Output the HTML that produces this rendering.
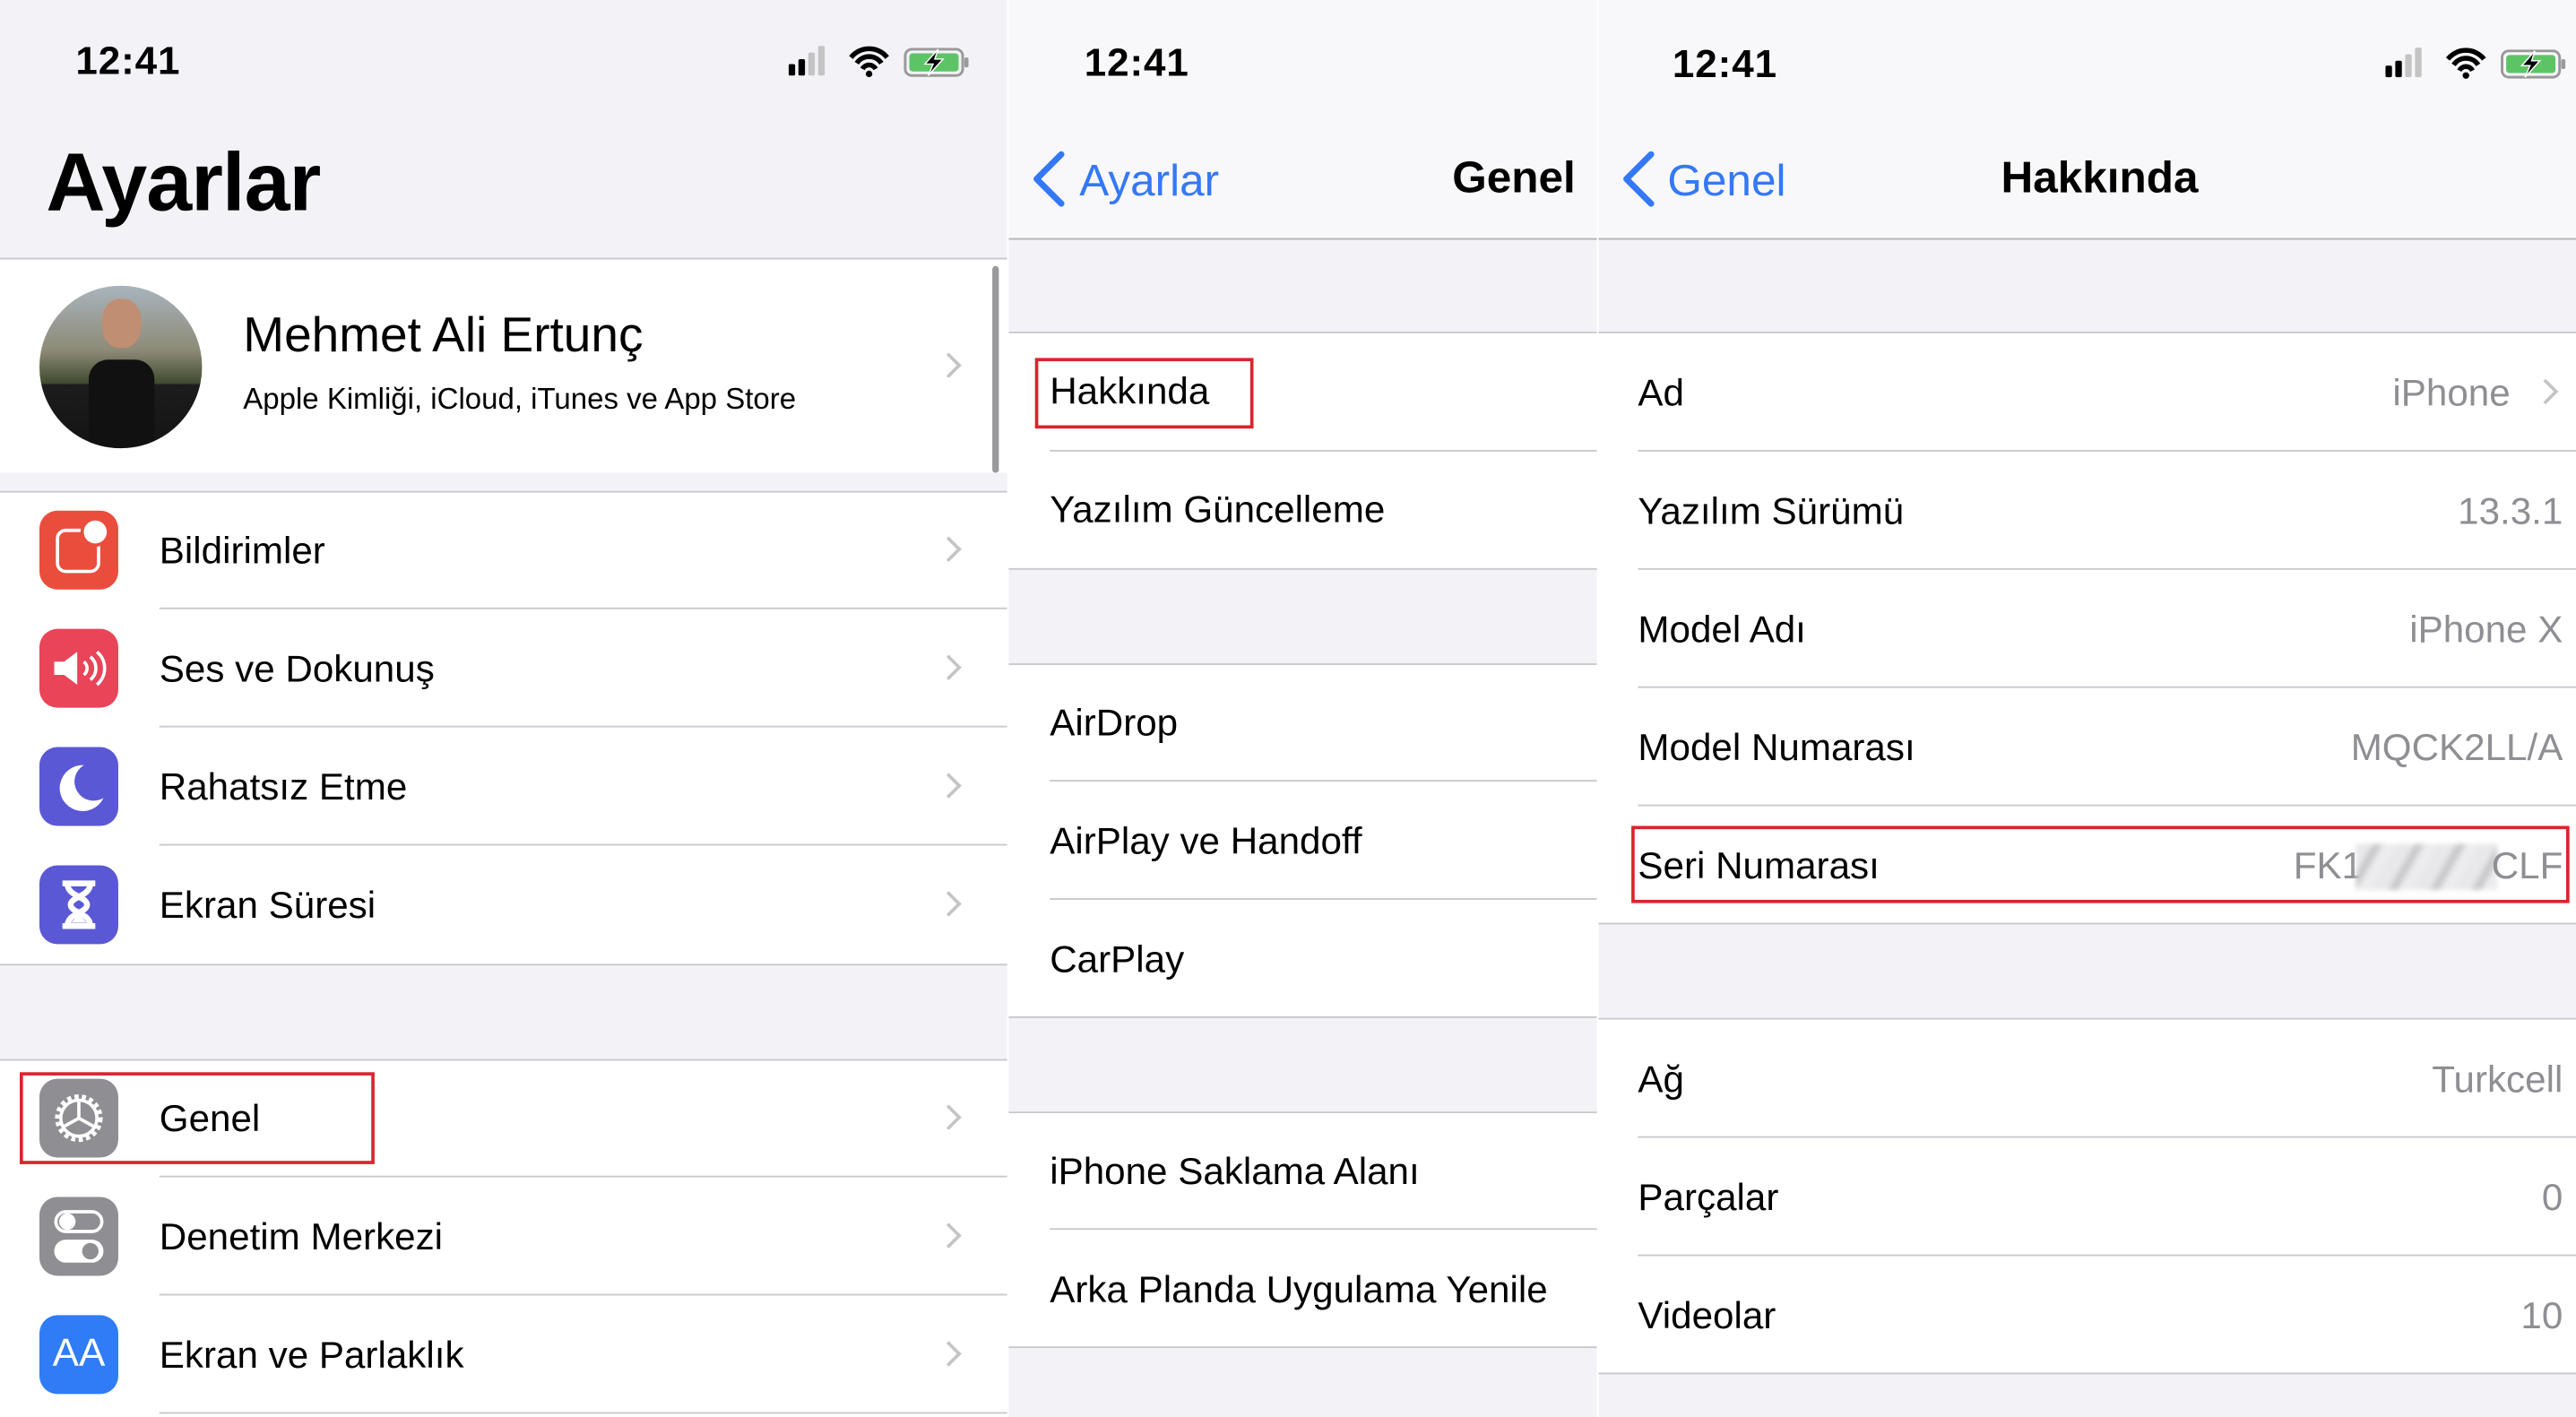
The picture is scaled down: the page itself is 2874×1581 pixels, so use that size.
<!DOCTYPE html>
<html><head><meta charset="utf-8"><style>
*{margin:0;padding:0;box-sizing:border-box}
html,body{width:2874px;height:1581px;overflow:hidden;background:#fff}
#w{position:absolute;left:0;top:0;width:1568px;height:863px;transform:scale(1.83291,1.832);transform-origin:0 0;font-family:"Liberation Sans",sans-serif;color:#000}
.a{position:absolute}
.t{position:absolute;font-size:23px;line-height:28px;white-space:nowrap}
.hl{position:absolute;height:1px;background:#c8c7cc}
.chev{position:absolute;width:11px;height:11px;border-right:2px solid #c4c4c7;border-top:2px solid #c4c4c7;transform:rotate(45deg)}
.ico{position:absolute;left:24px;width:48px;height:48px;border-radius:11px}
.v{position:absolute;font-size:23px;line-height:28px;color:#8e8e93;white-space:nowrap;text-align:right}
.time{position:absolute;font-size:24px;font-weight:bold;letter-spacing:0.5px}
.red{position:absolute;border:2px solid #d9252e}
</style></head><body><div id="w">

<!-- PANEL 1 -->
<div class="a" style="left:0;top:0;width:613px;height:863px;background:#f2f2f7"></div>
<div class="time" style="left:46px;top:24px">12:41</div>
<svg class="a" style="left:480px;top:27px" width="112" height="22" viewBox="0 0 112 22">
<rect x="0" y="12" width="4" height="7" rx="1" fill="#000"/><rect x="6" y="9" width="4" height="10" rx="1" fill="#000"/><rect x="12" y="5" width="4" height="14" rx="1" fill="#c4c4c4"/><rect x="18" y="1" width="4" height="18" rx="1" fill="#c4c4c4"/>
<path d="M38 8 a14 14 0 0 1 22 0 M41.5 11.5 a9 9 0 0 1 15 0 M45 15 a4.5 4.5 0 0 1 8 0" stroke="#000" stroke-width="3" fill="none"/><circle cx="49" cy="18" r="2" fill="#000"/>
<rect x="71" y="3" width="35" height="16" rx="4" fill="none" stroke="#999" stroke-width="1.6"/><rect x="73.5" y="5.5" width="30" height="11" rx="2" fill="#5dc466"/><rect x="107" y="8" width="2.5" height="6" rx="1" fill="#999"/>
<path d="M91 3 L83 12 L88 12 L85 19 L94 9 L89 9 Z" fill="#000" stroke="#fff" stroke-width="0.8"/></svg>
<div class="a" style="left:28px;top:82px;font-size:50px;font-weight:bold;letter-spacing:-0.5px">Ayarlar</div>
<div class="hl" style="left:0;top:157px;width:613px"></div>
<div class="a" style="left:0;top:158px;width:613px;height:130px;background:#fff"></div>
<div class="a" style="left:24px;top:174px;width:99px;height:99px;border-radius:50%;background:radial-gradient(circle at 50% 25%,#c9a58a 0 12%,transparent 13%),linear-gradient(180deg,#a9b4bd 0%,#8d8a76 40%,#3f4a2e 60%,#1c1c1c 61%,#141414 100%);overflow:hidden"><div class="a" style="left:30px;top:45px;width:40px;height:60px;background:#111;border-radius:12px 12px 0 0"></div><div class="a" style="left:38px;top:8px;width:24px;height:30px;background:#c08e72;border-radius:45%"></div></div>
<div class="a" style="left:148px;top:188px;font-size:30px">Mehmet Ali Ertunç</div>
<div class="a" style="left:148px;top:233px;font-size:18px">Apple Kimliği, iCloud, iTunes ve App Store</div>
<div class="chev" style="left:572px;top:217px"></div>
<div class="a" style="left:604px;top:162px;width:4px;height:126px;background:#9a9a9e;border-radius:2px"></div>
<div class="hl" style="left:0;top:299px;width:613px"></div>
<div class="a" style="left:0;top:300px;width:613px;height:287px;background:#fff"></div>
<div class="a" style="left:0;top:646px;width:613px;height:217px;background:#fff"></div>
<div class="hl" style="left:97px;top:370px;width:516px"></div>
<div class="hl" style="left:97px;top:442px;width:516px"></div>
<div class="hl" style="left:97px;top:514px;width:516px"></div>
<div class="hl" style="left:0;top:587px;width:613px"></div>
<div class="hl" style="left:0;top:645px;width:613px"></div>
<div class="hl" style="left:97px;top:716px;width:516px"></div>
<div class="hl" style="left:97px;top:788px;width:516px"></div>
<div class="hl" style="left:97px;top:860px;width:516px"></div>

<div class="ico" style="top:311px;background:#eb4d3d"><div class="a" style="left:10px;top:11px;width:27px;height:27px;border:2.5px solid #fff;border-radius:6px"></div><div class="a" style="left:27px;top:6px;width:14px;height:14px;border-radius:50%;background:#fff;box-shadow:0 0 0 2px #eb4d3d"></div></div>
<div class="t" style="left:97px;top:321px">Bildirimler</div><div class="chev" style="left:572px;top:329px"></div>

<div class="ico" style="top:383px;background:#ea4459"><svg width="48" height="48"><path d="M9 20h6l8-6v20l-8-6H9z" fill="#fff"/><path d="M27 20a5 5 0 0 1 0 8M31 17a9 9 0 0 1 0 14M35 14a13 13 0 0 1 0 20" stroke="#fff" stroke-width="2" fill="none"/></svg></div>
<div class="t" style="left:97px;top:393px">Ses ve Dokunuş</div><div class="chev" style="left:572px;top:401px"></div>

<div class="ico" style="top:455px;background:#5a58d5"><svg width="48" height="48"><path d="M27 11a14 14 0 1 0 12 20a11 11 0 0 1-12-20z" fill="#fff"/></svg></div>
<div class="t" style="left:97px;top:465px">Rahatsız Etme</div><div class="chev" style="left:572px;top:473px"></div>

<div class="ico" style="top:527px;background:#5a58d5"><svg width="48" height="48"><path d="M14 11h20M14 37h20M17 11c0 8 12 8 12 13s-12 5-12 13M31 11c0 8-12 8-12 13s12 5 12 13" stroke="#fff" stroke-width="3.5" fill="none"/><path d="M19 35l5-5 5 5z" fill="#fff"/></svg></div>
<div class="t" style="left:97px;top:537px">Ekran Süresi</div><div class="chev" style="left:572px;top:545px"></div>

<div class="ico" style="top:657px;background:#8e8e93"><svg width="48" height="48"><circle cx="24" cy="24" r="13" fill="none" stroke="#fff" stroke-width="3" stroke-dasharray="2.5 2"/><circle cx="24" cy="24" r="11" fill="none" stroke="#fff" stroke-width="2"/><path d="M24 24L24 14M24 24L15 29M24 24L33 29" stroke="#fff" stroke-width="2"/></svg></div>
<div class="t" style="left:97px;top:667px">Genel</div><div class="chev" style="left:572px;top:675px"></div>
<div class="red" style="left:12px;top:653px;width:216px;height:56px"></div>

<div class="ico" style="top:729px;background:#8e8e93"><div class="a" style="left:9px;top:8px;width:30px;height:14px;border:2.5px solid #fff;border-radius:7px"></div><div class="a" style="left:12px;top:10px;width:10px;height:10px;border-radius:50%;background:#fff"></div><div class="a" style="left:9px;top:26px;width:30px;height:14px;background:#fff;border-radius:7px"></div><div class="a" style="left:26px;top:28px;width:10px;height:10px;border-radius:50%;background:#8e8e93"></div></div>
<div class="t" style="left:97px;top:739px">Denetim Merkezi</div><div class="chev" style="left:572px;top:747px"></div>

<div class="ico" style="top:801px;background:#2f7cf6;color:#fff;font-size:24px;line-height:48px;text-align:center">AA</div>
<div class="t" style="left:97px;top:811px">Ekran ve Parlaklık</div><div class="chev" style="left:572px;top:819px"></div>

<!-- PANEL 2 -->
<div class="a" style="left:614px;top:0;width:358px;height:145px;background:#f8f8fa"></div>
<div class="a" style="left:614px;top:146px;width:358px;height:717px;background:#f2f2f7"></div>
<div class="time" style="left:660px;top:25px">12:41</div>
<svg class="a" style="left:626px;top:91px" width="24" height="36"><path d="M20 3 L5 18 L20 33" stroke="#3478f6" stroke-width="3.8" fill="none" stroke-linecap="round" stroke-linejoin="round"/></svg>
<div class="a" style="left:657px;top:95px;font-size:27px;color:#3478f6">Ayarlar</div>
<div class="a" style="left:884px;top:93px;font-size:27px;font-weight:bold">Genel</div>
<div class="hl" style="left:614px;top:145px;width:358px;background:#b2b2b6"></div>
<div class="hl" style="left:614px;top:202px;width:358px"></div>
<div class="a" style="left:614px;top:203px;width:358px;height:143px;background:#fff"></div>
<div class="hl" style="left:639px;top:274px;width:333px"></div>
<div class="hl" style="left:614px;top:346px;width:358px"></div>
<div class="hl" style="left:614px;top:404px;width:358px"></div>
<div class="a" style="left:614px;top:405px;width:358px;height:214px;background:#fff"></div>
<div class="hl" style="left:639px;top:475px;width:333px"></div>
<div class="hl" style="left:639px;top:547px;width:333px"></div>
<div class="hl" style="left:614px;top:619px;width:358px"></div>
<div class="hl" style="left:614px;top:677px;width:358px"></div>
<div class="a" style="left:614px;top:678px;width:358px;height:142px;background:#fff"></div>
<div class="hl" style="left:639px;top:748px;width:333px"></div>
<div class="hl" style="left:614px;top:820px;width:358px"></div>
<div class="t" style="left:639px;top:224px">Hakkında</div>
<div class="red" style="left:630px;top:218px;width:133px;height:43px"></div>
<div class="t" style="left:639px;top:296px">Yazılım Güncelleme</div>
<div class="t" style="left:639px;top:426px">AirDrop</div>
<div class="t" style="left:639px;top:498px">AirPlay ve Handoff</div>
<div class="t" style="left:639px;top:570px">CarPlay</div>
<div class="t" style="left:639px;top:699px">iPhone Saklama Alanı</div>
<div class="t" style="left:639px;top:771px">Arka Planda Uygulama Yenile</div>

<!-- PANEL 3 -->
<div class="a" style="left:973px;top:0;width:595px;height:145px;background:#f8f8fa"></div>
<div class="a" style="left:973px;top:146px;width:595px;height:717px;background:#f2f2f7"></div>
<div class="time" style="left:1018px;top:26px">12:41</div>
<svg class="a" style="left:1452px;top:28px" width="112" height="22" viewBox="0 0 112 22">
<rect x="0" y="12" width="4" height="7" rx="1" fill="#000"/><rect x="6" y="9" width="4" height="10" rx="1" fill="#000"/><rect x="12" y="5" width="4" height="14" rx="1" fill="#c4c4c4"/><rect x="18" y="1" width="4" height="18" rx="1" fill="#c4c4c4"/>
<path d="M38 8 a14 14 0 0 1 22 0 M41.5 11.5 a9 9 0 0 1 15 0 M45 15 a4.5 4.5 0 0 1 8 0" stroke="#000" stroke-width="3" fill="none"/><circle cx="49" cy="18" r="2" fill="#000"/>
<rect x="71" y="3" width="35" height="16" rx="4" fill="none" stroke="#999" stroke-width="1.6"/><rect x="73.5" y="5.5" width="30" height="11" rx="2" fill="#5dc466"/><rect x="107" y="8" width="2.5" height="6" rx="1" fill="#999"/>
<path d="M91 3 L83 12 L88 12 L85 19 L94 9 L89 9 Z" fill="#000" stroke="#fff" stroke-width="0.8"/></svg>
<svg class="a" style="left:985px;top:91px" width="24" height="36"><path d="M20 3 L5 18 L20 33" stroke="#3478f6" stroke-width="3.8" fill="none" stroke-linecap="round" stroke-linejoin="round"/></svg>
<div class="a" style="left:1015px;top:95px;font-size:27px;color:#3478f6">Genel</div>
<div class="a" style="left:1218px;top:93px;font-size:27px;font-weight:bold">Hakkında</div>
<div class="hl" style="left:973px;top:145px;width:595px;background:#b2b2b6"></div>
<div class="hl" style="left:973px;top:202px;width:595px"></div>
<div class="a" style="left:973px;top:203px;width:595px;height:359px;background:#fff"></div>
<div class="hl" style="left:997px;top:274px;width:571px"></div>
<div class="hl" style="left:997px;top:346px;width:571px"></div>
<div class="hl" style="left:997px;top:418px;width:571px"></div>
<div class="hl" style="left:997px;top:490px;width:571px"></div>
<div class="hl" style="left:973px;top:562px;width:595px"></div>
<div class="hl" style="left:973px;top:620px;width:595px"></div>
<div class="a" style="left:973px;top:621px;width:595px;height:215px;background:#fff"></div>
<div class="hl" style="left:997px;top:692px;width:571px"></div>
<div class="hl" style="left:997px;top:764px;width:571px"></div>
<div class="hl" style="left:973px;top:836px;width:595px"></div>

<div class="t" style="left:997px;top:225px">Ad</div><div class="v" style="right:40px;top:225px">iPhone</div><div class="chev" style="left:1544px;top:233px"></div>
<div class="t" style="left:997px;top:297px">Yazılım Sürümü</div><div class="v" style="right:8px;top:297px">13.3.1</div>
<div class="t" style="left:997px;top:369px">Model Adı</div><div class="v" style="right:8px;top:369px">iPhone X</div>
<div class="t" style="left:997px;top:441px">Model Numarası</div><div class="v" style="right:8px;top:441px">MQCK2LL/A</div>
<div class="t" style="left:997px;top:513px">Seri Numarası</div>
<div class="v" style="left:1396px;top:513px">FK1</div>
<div class="a" style="left:1434px;top:514px;width:86px;height:28px;background:repeating-linear-gradient(120deg,#e8e8ea 0 8px,#c9c9cc 10px 13px,#ececee 15px 22px);filter:blur(1.5px)"></div>
<div class="v" style="right:8px;top:513px">CLF</div>
<div class="red" style="left:993px;top:503px;width:571px;height:47px"></div>
<div class="t" style="left:997px;top:643px">Ağ</div><div class="v" style="right:8px;top:643px">Turkcell</div>
<div class="t" style="left:997px;top:715px">Parçalar</div><div class="v" style="right:8px;top:715px">0</div>
<div class="t" style="left:997px;top:787px">Videolar</div><div class="v" style="right:8px;top:787px">10</div>
</div></body></html>
